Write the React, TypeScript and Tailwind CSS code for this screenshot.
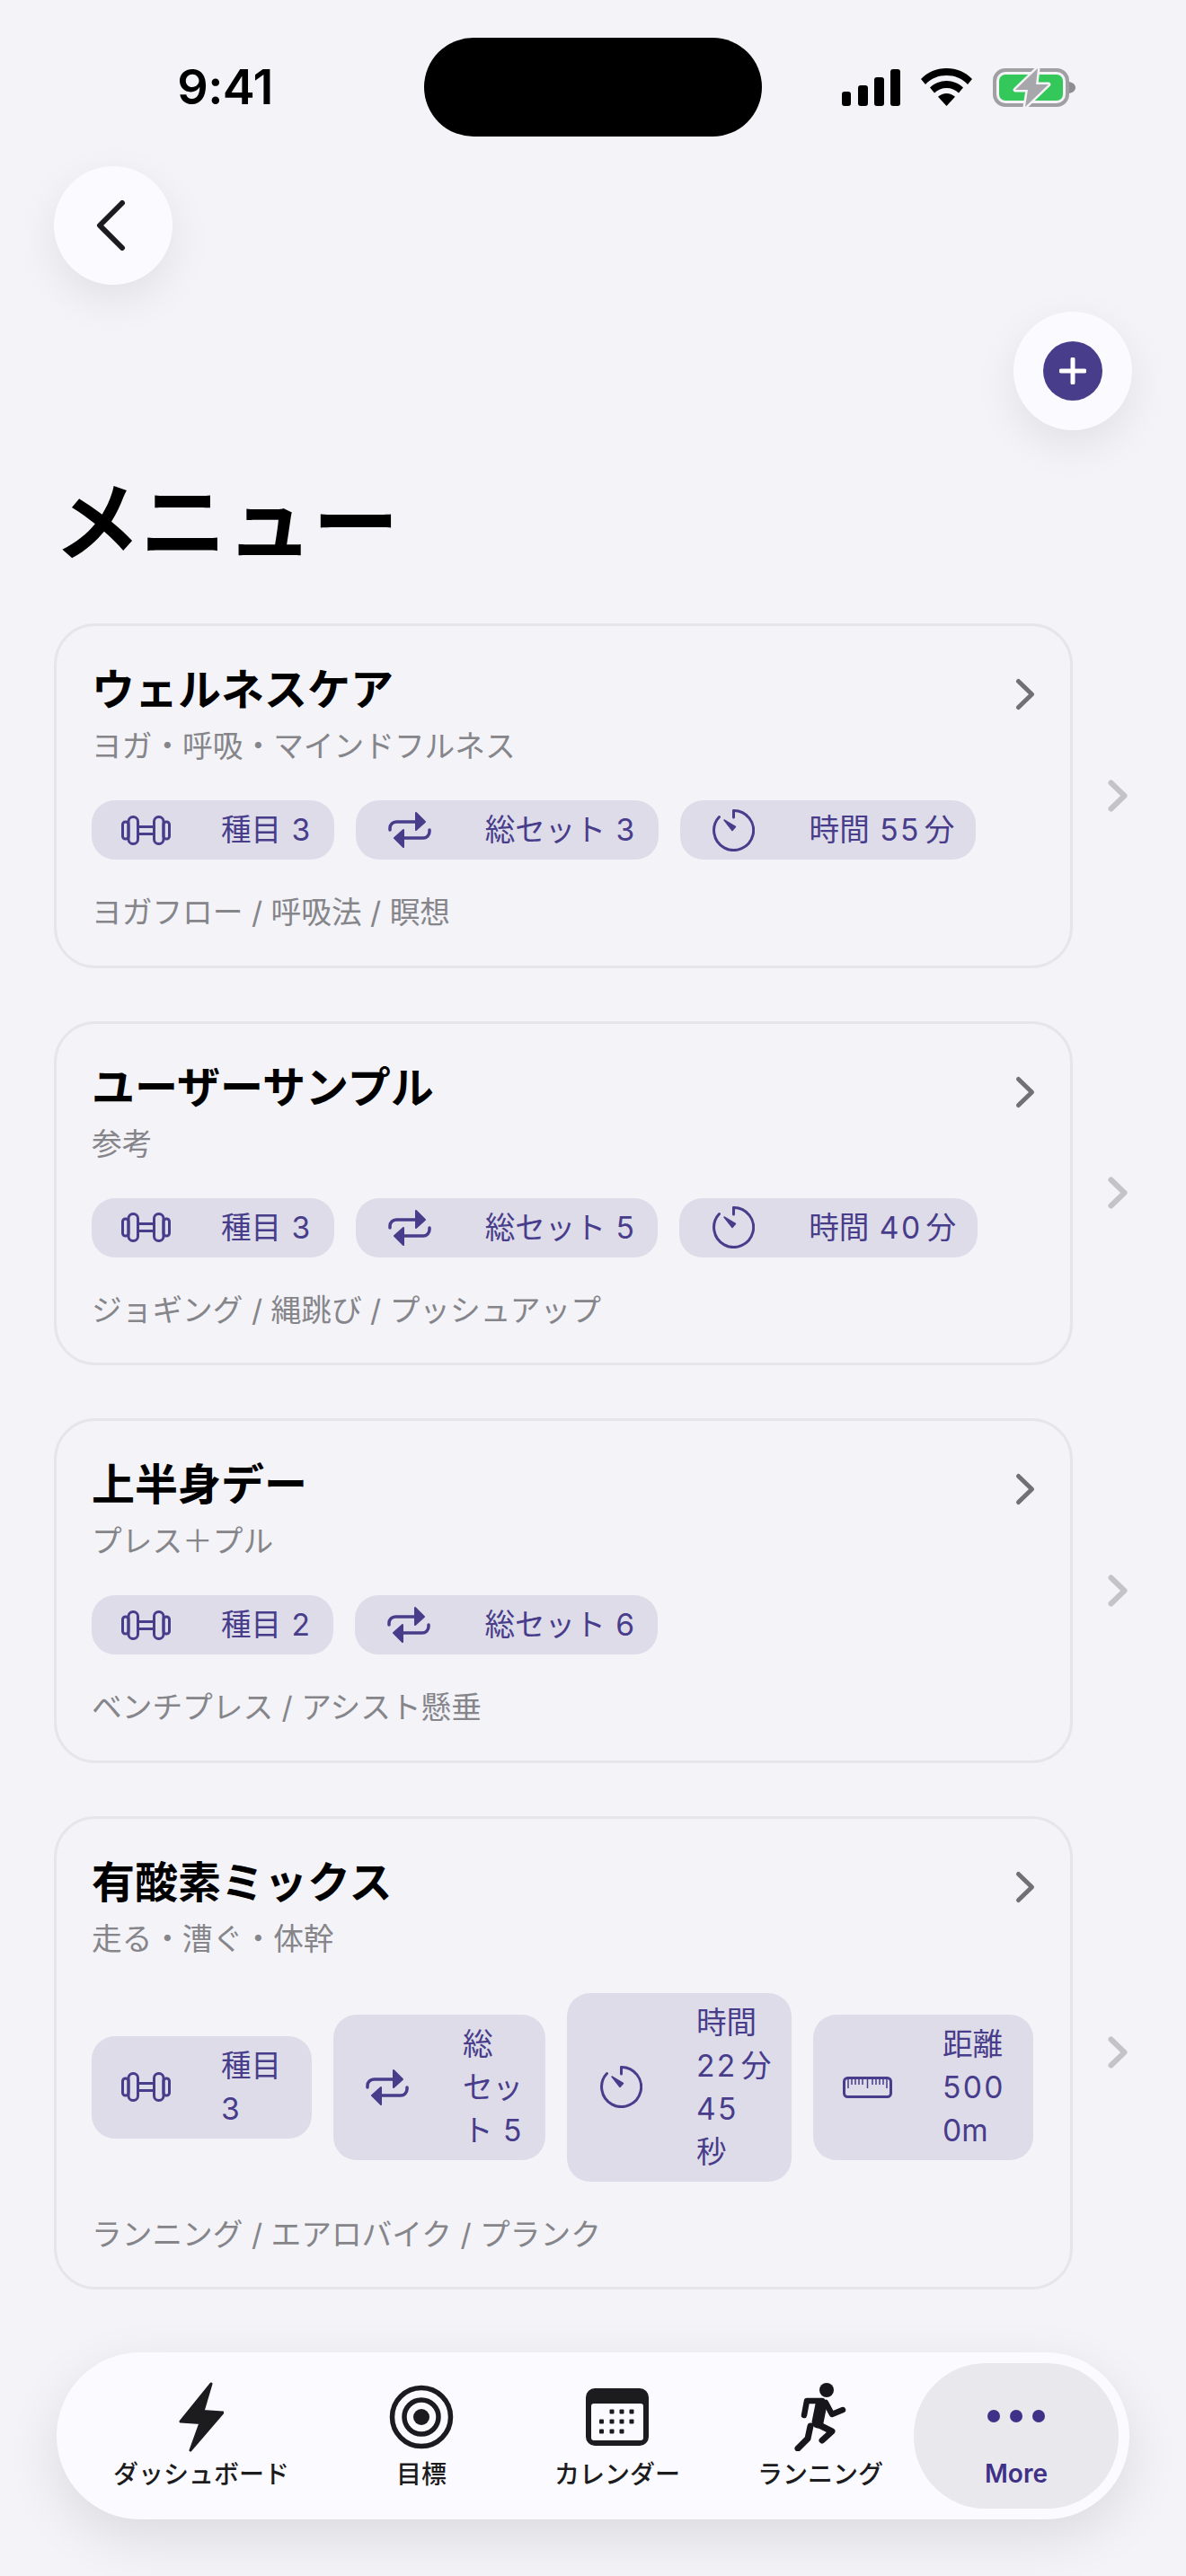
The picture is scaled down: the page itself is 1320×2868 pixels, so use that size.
import React from "react";

const FONT = "font-['Inter','Noto_Sans_CJK_JP','Noto_Sans',sans-serif]";

function Dumbbell() {
  return (
    <svg width="55" height="33" viewBox="0 0 55 33" fill="none" stroke="#483d8b" strokeWidth="3">
      <rect x="1.5" y="7" width="6.5" height="19" rx="3" />
      <rect x="8" y="1.5" width="10.5" height="30" rx="5" />
      <path d="M18.5 12.5h18M18.5 20.5h18" />
      <rect x="36.5" y="1.5" width="10.5" height="30" rx="5" />
      <rect x="47" y="7" width="6.5" height="19" rx="3" />
    </svg>
  );
}
function Repeat() {
  return (
    <svg width="48" height="40" viewBox="0 0 48 40" fill="none" stroke="#483d8b" strokeWidth="3.5" strokeLinecap="round">
      <path d="M2 20v-2a7 7 0 0 1 7-7h24" />
      <path d="M46 20v2a7 7 0 0 1-7 7H15" />
      <path d="M31 1l10 10-10 9z" fill="#483d8b" stroke="#483d8b" strokeWidth="2" strokeLinejoin="round" />
      <path d="M17 20L7 29l10 10z" fill="#483d8b" stroke="#483d8b" strokeWidth="2" strokeLinejoin="round" />
    </svg>
  );
}
function Timer() {
  return (
    <svg width="47" height="47" viewBox="0 0 47 47" fill="none" stroke="#483d8b" strokeWidth="3" strokeLinecap="round">
      <path d="M23.500 1.500a22 22 0 1 1-16 7" />
      <path d="M23.500 1.500v7.500" />
      <path d="M13 12l12.500 7.500-3.500 4z" fill="#483d8b" stroke="#483d8b" strokeWidth="1.500" strokeLinejoin="round" />
    </svg>
  );
}
function Ruler() {
  const ticks = [6, 10, 14, 18, 22, 27.5, 33, 37, 41, 45, 49];
  return (
    <svg width="55" height="24" viewBox="0 0 55 24" fill="none" stroke="#483d8b">
      <rect x="1.5" y="1.5" width="52" height="21" rx="4" strokeWidth="3" />
      {ticks.map((t, i) => (
        <path key={i} d={`M${t} 2v${i === 0 || i === 5 || i === 10 ? 11 : 7}`} strokeWidth="1.5" />
      ))}
    </svg>
  );
}

const icons = { d: <Dumbbell />, r: <Repeat />, t: <Timer />, m: <Ruler /> };

function ChipLine({ text }: { text: string }) {
  const parts = text.split(/(\d+)/);
  return (
    <div>
      {parts.map((p, i) =>
        /^\d+$/.test(p) ? (
          <span
            key={i}
            className={`${parts[i + 1] === "m" ? "" : "tracking-[0.07em]"} ${parts[i + 1] === "分" ? "mr-[4px]" : ""} ${i > 0 && parts[i - 1] ? "ml-[2px]" : ""}`}
          >
            {p}
          </span>
        ) : (
          <span key={i}>{p}</span>
        ),
      )}
    </div>
  );
}

function Chip({ icon, lines, width }: { icon: "d" | "r" | "t" | "m"; lines: string[]; width?: string }) {
  return (
    <div className={`flex items-center pl-[24px] pr-[24px] py-[9px] rounded-[26px] bg-[#dedce9] shrink-0 ${width ?? ""}`}>
      <div className="w-[72px] flex justify-center shrink-0">{icons[icon]}</div>
      <div className="ml-[48px] text-[33.6px] leading-[48px] text-[#483d8b] whitespace-nowrap">
        {lines.map((l, i) => (
          <ChipLine key={i} text={l} />
        ))}
      </div>
    </div>
  );
}

function Chevron({ color, sw = 5 }: { color: string; sw?: number }) {
  return (
    <svg width="24" height="38" viewBox="0 0 24 38" fill="none" stroke={color} strokeWidth={sw} strokeLinecap="round" strokeLinejoin="round">
      <path d="M4.500 4.500L19.500 19 4.500 33.500" />
    </svg>
  );
}

function Card({ title, sub, foot, children }: { title: string; sub: string; foot: string; children: React.ReactNode }) {
  return (
    <div className="flex items-center">
      <div className="w-[1134px] rounded-[46px] border-[3px] border-[#e6e6ea] pt-[41px] pb-[34.5px] pl-[39px] pr-[40px]">
        <div className="flex items-center justify-between">
          <div className="text-[48px] leading-[60px] font-bold text-black">{title}</div>
          <div className="mr-[-2px] mt-[10px]"><Chevron color="#717175" /></div>
        </div>
        <div className="text-[33.7px] leading-[44px] mt-[11px] text-[#85858a]">{sub}</div>
        <div className="flex items-center gap-[24px] mt-[38px]">{children}</div>
        <div className="text-[33.7px] leading-[48px] mt-[35px] text-[#85858a]">{foot}</div>
      </div>
      <div className="ml-[38px]"><Chevron color="#c4c4c6" sw={6} /></div>
    </div>
  );
}

function Tab({ width, label, icon }: { width: string; label: string; icon: React.ReactNode }) {
  return (
    <div className={`flex flex-col items-center ${width}`}>
      <div className="h-[80px] flex items-center justify-center">{icon}</div>
      <div className="text-[28px] leading-[36px] mt-[6px] font-medium text-[#1c1c1e] whitespace-nowrap">{label}</div>
    </div>
  );
}

export default function App() {
  return (
    <div className={`relative w-[1320px] h-[2868px] overflow-hidden bg-[#f3f3f8] flex flex-col ${FONT}`}>
      {/* status bar */}
      <div className="flex items-center pt-[42px]">
        <div className="w-[472px] pl-[29px] text-center text-[54px] font-semibold text-black leading-[110px] tracking-[-0.01em] font-['Inter',sans-serif]">9:41</div>
        <div className="w-[376px] h-[110px] rounded-[55px] bg-black" />
        <div className="flex items-center ml-[89px]">
          <svg width="65" height="41" viewBox="0 0 65 41" fill="#000">
            <rect x="0" y="25" width="10" height="16" rx="3" />
            <rect x="18" y="18" width="11" height="23" rx="3" />
            <rect x="36" y="9" width="11" height="32" rx="3" />
            <rect x="54" y="0" width="11" height="41" rx="3" />
          </svg>
          <svg className="ml-[23px]" width="57" height="42" viewBox="0 0 57 42" fill="#000">
            <path d="M28.5 0C17.5 0 7.5 4 0 12l5 6C11.5 11 19.5 8 28.5 8S45.5 11 52 18l5-6C49.5 4 39.5 0 28.5 0z" />
            <path d="M28.5 14c-7 0-13.500 2.800-18.500 7.500l5 6c3.500-3.500 8.300-5.500 13.500-5.500S38.500 24 42 27.500l5-6C42 16.800 35.500 14 28.500 14z" />
            <path d="M28.500 28c-3.500 0-6.800 1.300-9.500 3.800L28.500 42 38 31.800C35.300 29.300 32 28 28.500 28z" />
          </svg>
          <svg className="ml-[23px]" width="93" height="50" viewBox="0 0 93 50" fill="none">
            <rect x="2" y="6" width="81" height="39" rx="12" stroke="#a0a0a3" strokeWidth="4" />
            <rect x="7" y="11" width="71" height="29" rx="7" fill="#34c759" />
            <path d="M85 19c4 1 7 3 7 6.500S89 31 85 32z" fill="#8e8e92" />
            <path d="M50 4L25 28h14l-3 19 26-25H48z" fill="#a7a7ab" stroke="#f3f3f8" strokeWidth="5" strokeLinejoin="round" paintOrder="stroke" />
          </svg>
        </div>
      </div>

      {/* back */}
      <div className="ml-[60px] mt-[33px] w-[132px] h-[132px] rounded-full bg-[#fbfbff] shadow-[0_16px_48px_rgba(0,0,0,0.08)] flex items-center justify-center">
        <svg className="mr-[6px]" width="34" height="56" viewBox="0 0 34 56" fill="none" stroke="#1c1c1e" strokeWidth="6" strokeLinecap="round" strokeLinejoin="round">
          <path d="M30 3L5 28l25 25" />
        </svg>
      </div>
      {/* add */}
      <div className="self-end mr-[60px] mt-[30px] w-[132px] h-[132px] rounded-full bg-[#fbfbff] shadow-[0_16px_48px_rgba(0,0,0,0.08)] flex items-center justify-center">
        <div className="w-[66px] h-[66px] rounded-full bg-[#483d8b] flex items-center justify-center">
          <svg width="30" height="30" viewBox="0 0 30 30" stroke="#fff" strokeWidth="5" strokeLinecap="round">
            <path d="M15 2v26M2 15h26" />
          </svg>
        </div>
      </div>

      <div className="ml-[60px] mt-[47px] text-[96px] leading-[110px] font-bold text-black">メニュー</div>

      <div className="ml-[60px] mt-[58px] flex flex-col gap-[59px]">
        <Card title="ウェルネスケア" sub="ヨガ・呼吸・マインドフルネス" foot="ヨガフロー / 呼吸法 / 瞑想">
          <Chip icon="d" lines={["種目 3"]} />
          <Chip icon="r" lines={["総セット 3"]} />
          <Chip icon="t" lines={["時間 55分"]} />
        </Card>
        <Card title="ユーザーサンプル" sub="参考" foot="ジョギング / 縄跳び / プッシュアップ">
          <Chip icon="d" lines={["種目 3"]} />
          <Chip icon="r" lines={["総セット 5"]} />
          <Chip icon="t" lines={["時間 40分"]} />
        </Card>
        <Card title="上半身デー" sub="プレス＋プル" foot="ベンチプレス / アシスト懸垂">
          <Chip icon="d" lines={["種目 2"]} />
          <Chip icon="r" lines={["総セット 6"]} />
        </Card>
        <Card title="有酸素ミックス" sub="走る・漕ぐ・体幹" foot="ランニング / エアロバイク / プランク">
          <Chip icon="d" lines={["種目", "3"]} width="w-[245px]" />
          <Chip icon="r" lines={["総", "セッ", "ト 5"]} width="w-[236px]" />
          <Chip icon="t" lines={["時間", "22分", "45", "秒"]} width="w-[250px]" />
          <Chip icon="m" lines={["距離", "500", "0m"]} width="w-[245px]" />
        </Card>
      </div>

      {/* tab bar */}
      <div className="absolute left-[63px] top-[2619px] w-[1194px] h-[186px] rounded-[93px] bg-[#fbfbff] shadow-[0_20px_60px_rgba(0,0,0,0.1)] flex items-center pl-[12px]">
        <Tab
          width="w-[298px]"
          label="ダッシュボード"
          icon={
            <svg width="50" height="78" viewBox="0 0 50 78" fill="#1c1c1e" stroke="#1c1c1e" strokeWidth="3" strokeLinejoin="round">
              <path d="M36 2L2 44l22 1.500L13 76l36-42-22-1.500z" />
            </svg>
          }
        />
        <Tab
          width="w-[192px]"
          label="目標"
          icon={
            <svg width="72" height="72" viewBox="0 0 72 72" fill="none" stroke="#1c1c1e" strokeWidth="5.500">
              <circle cx="36" cy="36" r="32.500" />
              <circle cx="36" cy="36" r="19" />
              <circle cx="36" cy="36" r="9" fill="#1c1c1e" stroke="none" />
            </svg>
          }
        />
        <Tab
          width="w-[244px]"
          label="カレンダー"
          icon={
            <svg width="70" height="64" viewBox="0 0 70 64" fill="#1c1c1e">
              <path fillRule="evenodd" d="M10 0h50a10 10 0 0 1 10 10v44a10 10 0 0 1-10 10H10A10 10 0 0 1 0 54V10A10 10 0 0 1 10 0zM9 17a3 3 0 0 0-3 3v35a3 3 0 0 0 3 3h52a3 3 0 0 0 3-3V20a3 3 0 0 0-3-3z" />
              {[[29, 26], [40, 26], [51, 26], [17.500, 37], [29, 37], [40, 37], [51, 37], [17.500, 48], [29, 48], [40, 48]].map(([x, y], i) => (
                <rect key={i} x={x - 2.500} y={y - 2.500} width="5" height="5" rx="1" />
              ))}
            </svg>
          }
        />
        <Tab
          width="w-[208px]"
          label="ランニング"
          icon={
            <svg width="60" height="76" viewBox="0 0 60 76" fill="none" stroke="#17171b" strokeLinecap="round" strokeLinejoin="round">
              <circle cx="37" cy="8" r="8" fill="#17171b" stroke="none" />
              <path d="M12 36l3-16h17" strokeWidth="6.500" />
              <path d="M31 24l-4 20" strokeWidth="13" />
              <path d="M36 22l7 13 12-5" strokeWidth="6.500" />
              <path d="M25 45l18 9-11 10" strokeWidth="7" />
              <path d="M19 48l-3 14L5 73" strokeWidth="7" />
            </svg>
          }
        />
        <div className="w-[228px] h-[162px] rounded-[80px] bg-[#e9e9ed] flex flex-col items-center">
          <div className="h-[80px] mt-[19px] flex items-center justify-center gap-[11px]">
            <span className="w-[14px] h-[14px] rounded-full bg-[#3f3188]" />
            <span className="w-[14px] h-[14px] rounded-full bg-[#3f3188]" />
            <span className="w-[14px] h-[14px] rounded-full bg-[#3f3188]" />
          </div>
          <div className="text-[28px] leading-[36px] mt-[6px] font-semibold text-[#3f3188]">More</div>
        </div>
      </div>
    </div>
  );
}
